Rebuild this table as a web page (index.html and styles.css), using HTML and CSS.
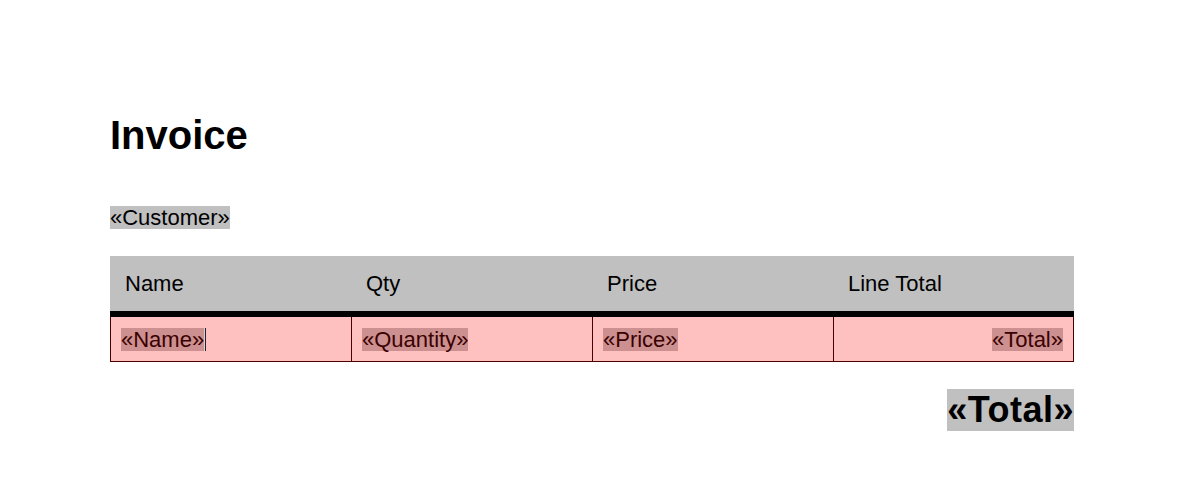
FILE: index.html
```html
<!DOCTYPE html>
<html>
<head>
<meta charset="utf-8">
<link rel="stylesheet" href="styles.css">
</head>
<body>
<div class="page">
  <h1 class="title">Invoice</h1>
  <div class="customer"><span class="field">«Customer»</span></div>
  <div class="table">
    <div class="thead">
      <div class="th">Name</div>
      <div class="th">Qty</div>
      <div class="th">Price</div>
      <div class="th">Line Total</div>
    </div>
    <div class="trow">
      <div class="td"><span class="mfield">«Name»</span><span class="caret"></span></div>
      <div class="td"><span class="mfield">«Quantity»</span></div>
      <div class="td"><span class="mfield">«Price»</span></div>
      <div class="td right"><span class="mfield">«Total»</span></div>
    </div>
  </div>
  <div class="grand"><span class="gfield">«Total»</span></div>
</div>
</body>
</html>
```
FILE: styles.css
```css
html, body {
  margin: 0;
  padding: 0;
  background: #ffffff;
}
body {
  font-family: "Liberation Sans", Arial, sans-serif;
  color: #000;
}
.page {
  width: 964px;
  margin-left: 110px;
  padding-top: 112px;
}
.title {
  margin: 0;
  font-size: 40px;
  font-weight: bold;
  line-height: 46px;
  height: 46px;
}
.customer {
  margin-top: 48px;
  height: 23px;
  font-size: 22px;
  line-height: 23px;
}
.field {
  display: inline-block;
  background: #c0c0c0;
  line-height: 23px;
}
.table {
  margin-top: 27px;
  width: 964px;
}
.thead {
  display: grid;
  grid-template-columns: repeat(4, 241px);
  height: 55px;
  background: #c0c0c0;
  border-bottom: 6px solid #000;
}
.th {
  display: flex;
  align-items: center;
  padding-left: 15px;
  font-size: 22px;
  padding-top: 1px;
}
.trow {
  display: grid;
  grid-template-columns: 240px 241px 241px 240px;
  height: 45px;
  box-sizing: border-box;
  border: 1px solid #4a0000;
  border-top: none;
  background: #ffc0c0;
}
.td {
  box-sizing: border-box;
  display: flex;
  align-items: center;
  padding: 1px 10px 0 10px;
  font-size: 22px;
  color: #3a0000;
}
.td + .td {
  border-left: 1px solid #4a0000;
}
.td.right {
  justify-content: flex-end;
}
.mfield {
  display: inline-block;
  background: #cc9090;
  line-height: 23px;
}
.caret {
  display: inline-block;
  width: 1px;
  height: 23px;
  background: #003040;
  margin-left: 1px;
}
.grand {
  margin-top: 27px;
  text-align: right;
  font-size: 36px;
  font-weight: bold;
  line-height: 42px;
}
.gfield {
  display: inline-block;
  background: #c0c0c0;
  line-height: 42px;
  letter-spacing: 0.5px;
}
```
